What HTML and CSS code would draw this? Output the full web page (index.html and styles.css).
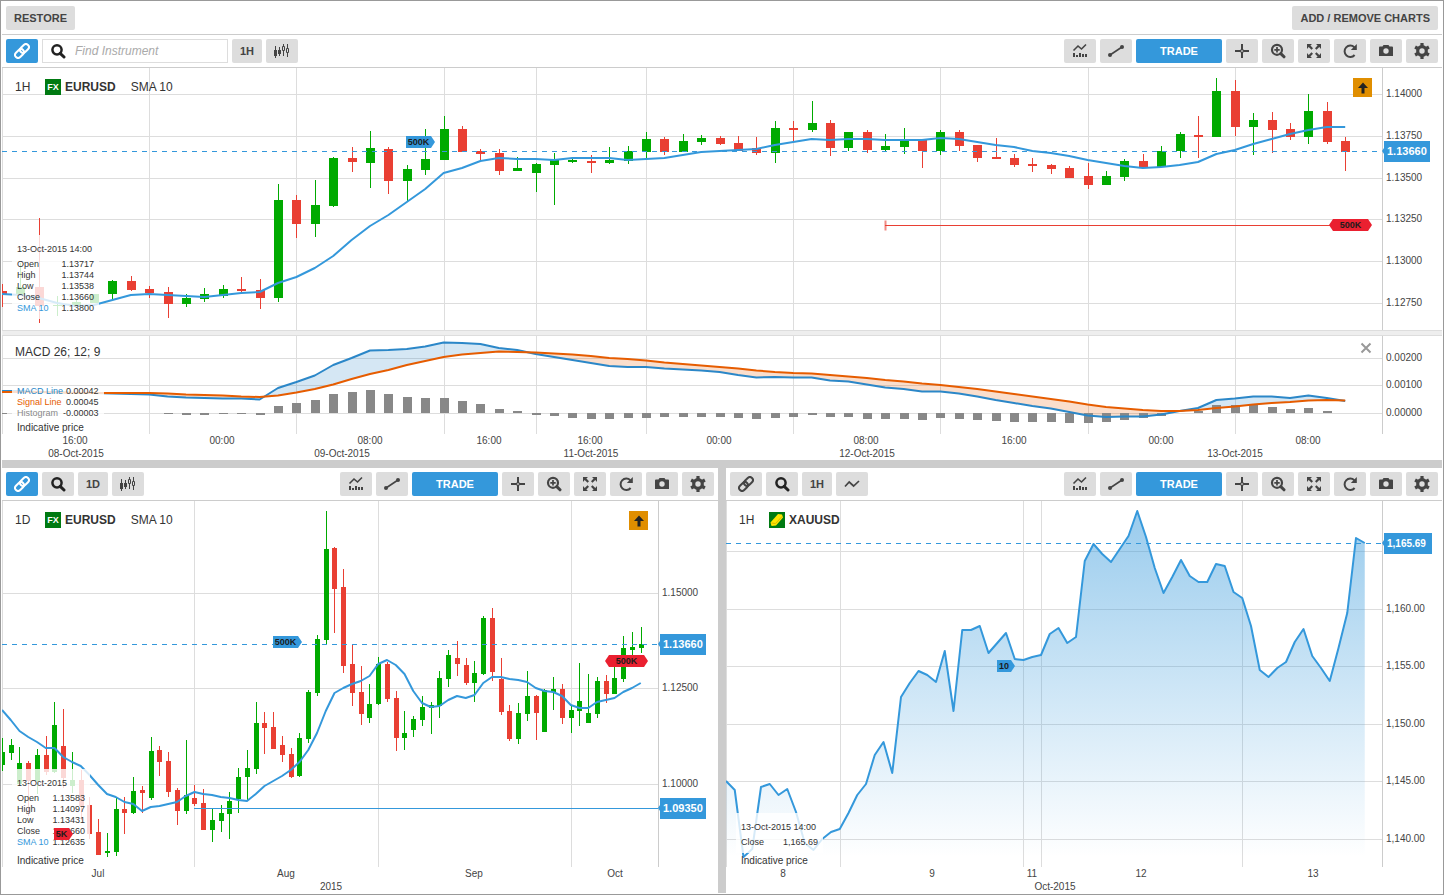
FILE: index.html
```html
<!DOCTYPE html>
<html lang="en">
<head>
<meta charset="utf-8">
<title>Charts</title>
<link rel="stylesheet" href="styles.css">
</head>
<body>
<svg class="sprite" aria-hidden="true">
  <symbol id="i-link" viewBox="0 0 16 16"><g transform="rotate(-45 8 8)" fill="none" stroke="currentColor" stroke-width="2"><rect x="-.5" y="5" width="10" height="6" rx="3"/><rect x="6.500" y="5" width="10" height="6" rx="3"/></g></symbol>
  <symbol id="i-search" viewBox="0 0 16 16"><circle cx="7" cy="6.8" r="4.6" fill="none" stroke="currentColor" stroke-width="2.5"/><path d="M10.2 10.4l3.8 3.6" stroke="currentColor" stroke-width="3" stroke-linecap="round"/></symbol>
  <symbol id="i-candles" viewBox="0 0 16 16"><path d="M1.500 3v12M5.500 4v9M9.500 1v12M13.500 1v13" stroke="currentColor"/><path d="M0 7h3v6H0zM4 7h3v4H4z" fill="currentColor"/><path d="M8.500 3.500h2v4h-2zM12.500 5.500h2v4h-2z" fill="#ddd" stroke="currentColor"/></symbol>
  <symbol id="i-indicator" viewBox="0 0 16 16"><path d="M1.500 7.500L6 3l3.500 3L14 1.500" fill="none" stroke="currentColor" stroke-width="1.600"/><path d="M1 10h2v4H1zM4 12h2v2H4zM7 10h2v4H7zM10 11h2v3h-2zM13 11h2v3h-2z" fill="currentColor"/></symbol>
  <symbol id="i-line" viewBox="0 0 16 16"><path d="M2 12L14 4" stroke="currentColor" stroke-width="1.600"/><circle cx="2" cy="12" r="2" fill="currentColor"/><circle cx="14" cy="4" r="2" fill="currentColor"/></symbol>
  <symbol id="i-cross" viewBox="0 0 16 16"><path d="M8 1v5M8 10v5M1 8h5M10 8h5" stroke="currentColor" stroke-width="2"/><path d="M8 6l2 2-2 2-2-2z" fill="none" stroke="currentColor" stroke-width="1.200"/></symbol>
  <symbol id="i-zoom" viewBox="0 0 16 16"><circle cx="7" cy="6.800" r="5" fill="none" stroke="currentColor" stroke-width="2.200"/><path d="M4.300 6.800h5.400M7 4.100v5.400" stroke="currentColor" stroke-width="1.700"/><path d="M10.800 10.600l3.200 3.200" stroke="currentColor" stroke-width="3" stroke-linecap="round"/></symbol>
  <symbol id="i-expand" viewBox="0 0 16 16"><path d="M1 1h5L4.400 2.600l2.600 2.600-1.500 1.500-2.800-2.600L1 6zM15 1h-5l1.600 1.600L9 5.200l1.500 1.500 2.800-2.600L15 6zM1 15h5l-1.600-1.600L7 10.800 5.500 9.300l-2.800 2.600L1 10zM15 15h-5l1.600-1.600L9 10.800l1.500-1.500 2.800 2.600L15 10z" fill="currentColor"/></symbol>
  <symbol id="i-refresh" viewBox="0 0 16 16"><path d="M12.300 4.200A5.700 5.700 0 1 0 12.600 12" fill="none" stroke="currentColor" stroke-width="2"/><path d="M14.800 1v6H8.800z" fill="currentColor"/></symbol>
  <symbol id="i-camera" viewBox="0 0 16 16"><path d="M1 4.500a1 1 0 0 1 1-1h2.500L5.500 2h5l1 1.500H14a1 1 0 0 1 1 1V13H1z" fill="currentColor"/><circle cx="8" cy="8" r="2.700" fill="#ddd"/></symbol>
  <symbol id="i-gear" viewBox="0 0 16 16"><circle cx="8" cy="8" r="4.300" fill="none" stroke="currentColor" stroke-width="3.200"/><path d="M8 0v3M8 13v3M1.100 4l2.600 1.500M12.300 10.500l2.600 1.500M1.100 12l2.600-1.500M12.300 5.500L14.900 4" stroke="currentColor" stroke-width="3.200"/></symbol>
  <symbol id="i-wave" viewBox="0 0 16 16"><path d="M1 10.500L5.200 6l4.400 4L15 5" fill="none" stroke="currentColor" stroke-width="1.700"/></symbol>
  <symbol id="i-up" viewBox="0 0 16 16"><path d="M8 2.500L13 8H9.500v5.500h-3V8H3z" fill="currentColor"/></symbol>
  <symbol id="i-gold" viewBox="0 0 16 16"><path d="M0 0h16v16H0z" fill="#007a12"/><path d="M1.500 10.500L9 2l4 .5 1 3L7 13.500 2.500 14z" fill="#ffe600"/><path d="M2.500 11l4 .500L13 4.500" fill="none" stroke="#d9b800"/></symbol>
  <symbol id="i-close" viewBox="0 0 16 16"><path d="M3.500 3.500l9 9M12.500 3.500l-9 9" stroke="currentColor" stroke-width="2"/></symbol>
</svg>

<div class="frame">
  <header class="topbar">
    <button class="btn btn-text" type="button">RESTORE</button>
    <button class="btn btn-text" type="button">ADD / REMOVE CHARTS</button>
  </header>

  <main class="board">
    <section class="chart">
      <div class="toolbar">
        <button class="btn btn-blue" type="button" aria-label="Link"><svg class="icon"><use href="#i-link"/></svg></button>
        <label class="search"><svg class="icon"><use href="#i-search"/></svg><input type="text" aria-label="Find Instrument" placeholder="Find Instrument"></label>
        <button class="btn btn-period" type="button">1H</button>
        <button class="btn" type="button" aria-label="Chart type"><svg class="icon"><use href="#i-candles"/></svg></button>
        <span class="spacer"></span>
        <button class="btn" type="button" aria-label="Indicators"><svg class="icon"><use href="#i-indicator"/></svg></button>
        <button class="btn" type="button" aria-label="Draw"><svg class="icon"><use href="#i-line"/></svg></button>
        <button class="btn btn-blue btn-trade" type="button">TRADE</button>
        <button class="btn" type="button" aria-label="Crosshair"><svg class="icon"><use href="#i-cross"/></svg></button>
        <button class="btn" type="button" aria-label="Zoom"><svg class="icon"><use href="#i-zoom"/></svg></button>
        <button class="btn" type="button" aria-label="Expand"><svg class="icon"><use href="#i-expand"/></svg></button>
        <button class="btn" type="button" aria-label="Refresh"><svg class="icon"><use href="#i-refresh"/></svg></button>
        <button class="btn" type="button" aria-label="Snapshot"><svg class="icon"><use href="#i-camera"/></svg></button>
        <button class="btn" type="button" aria-label="Settings"><svg class="icon"><use href="#i-gear"/></svg></button>
      </div>
      <div class="pane pane-main" data-pane="hourly">
        <div class="legend"><span class="period">1H</span><span class="fx">FX</span><b>EURUSD</b><span class="study">SMA 10</span></div>
        <button class="jump" type="button" aria-label="Jump to latest"><svg class="icon"><use href="#i-up"/></svg></button>
        <div class="readout">
          <p>13-Oct-2015 14:00</p>
          <table>
            <tr><th>Open</th><td>1.13717</td></tr>
            <tr><th>High</th><td>1.13744</td></tr>
            <tr><th>Low</th><td>1.13538</td></tr>
            <tr><th>Close</th><td>1.13660</td></tr>
            <tr><th class="blue">SMA 10</th><td>1.13800</td></tr>
          </table>
        </div>
      </div>
      <div class="divider"></div>
      <div class="pane pane-study" data-pane="macd">
        <div class="legend">MACD 26; 12; 9</div>
        <button class="close" type="button" aria-label="Remove MACD"><svg class="icon"><use href="#i-close"/></svg></button>
        <div class="readout">
          <table>
            <tr><th class="blue-dark">MACD Line</th><td>0.00042</td></tr>
            <tr><th class="orange">Signal Line</th><td>0.00045</td></tr>
            <tr><th class="gray">Histogram</th><td>-0.00003</td></tr>
          </table>
        </div>
        <p class="note">Indicative price</p>
      </div>
      <div class="time-axis" data-axis="hourly"></div>
    </section>

    <div class="row">
      <section class="chart">
        <div class="toolbar">
          <button class="btn btn-blue" type="button" aria-label="Link"><svg class="icon"><use href="#i-link"/></svg></button>
          <button class="btn" type="button" aria-label="Find Instrument"><svg class="icon dark"><use href="#i-search"/></svg></button>
          <button class="btn btn-period" type="button">1D</button>
          <button class="btn" type="button" aria-label="Chart type"><svg class="icon"><use href="#i-candles"/></svg></button>
          <span class="spacer"></span>
          <button class="btn" type="button" aria-label="Indicators"><svg class="icon"><use href="#i-indicator"/></svg></button>
          <button class="btn" type="button" aria-label="Draw"><svg class="icon"><use href="#i-line"/></svg></button>
          <button class="btn btn-blue btn-trade" type="button">TRADE</button>
          <button class="btn" type="button" aria-label="Crosshair"><svg class="icon"><use href="#i-cross"/></svg></button>
          <button class="btn" type="button" aria-label="Zoom"><svg class="icon"><use href="#i-zoom"/></svg></button>
          <button class="btn" type="button" aria-label="Expand"><svg class="icon"><use href="#i-expand"/></svg></button>
          <button class="btn" type="button" aria-label="Refresh"><svg class="icon"><use href="#i-refresh"/></svg></button>
          <button class="btn" type="button" aria-label="Snapshot"><svg class="icon"><use href="#i-camera"/></svg></button>
          <button class="btn" type="button" aria-label="Settings"><svg class="icon"><use href="#i-gear"/></svg></button>
        </div>
        <div class="pane pane-main" data-pane="daily">
          <div class="legend"><span class="period">1D</span><span class="fx">FX</span><b>EURUSD</b><span class="study">SMA 10</span></div>
          <button class="jump" type="button" aria-label="Jump to latest"><svg class="icon"><use href="#i-up"/></svg></button>
          <div class="readout readout-raised">
            <p>13-Oct-2015</p>
            <table>
              <tr><th>Open</th><td>1.13583</td></tr>
              <tr><th>High</th><td>1.14097</td></tr>
              <tr><th>Low</th><td>1.13431</td></tr>
              <tr><th>Close</th><td>1.13660</td></tr>
              <tr><th class="blue">SMA 10</th><td>1.12635</td></tr>
            </table>
          </div>
          <p class="note">Indicative price</p>
        </div>
        <div class="time-axis" data-axis="daily"></div>
      </section>

      <section class="chart">
        <div class="toolbar">
          <button class="btn" type="button" aria-label="Link"><svg class="icon"><use href="#i-link"/></svg></button>
          <button class="btn" type="button" aria-label="Find Instrument"><svg class="icon dark"><use href="#i-search"/></svg></button>
          <button class="btn btn-period" type="button">1H</button>
          <button class="btn" type="button" aria-label="Chart type"><svg class="icon"><use href="#i-wave"/></svg></button>
          <span class="spacer"></span>
          <button class="btn" type="button" aria-label="Indicators"><svg class="icon"><use href="#i-indicator"/></svg></button>
          <button class="btn" type="button" aria-label="Draw"><svg class="icon"><use href="#i-line"/></svg></button>
          <button class="btn btn-blue btn-trade" type="button">TRADE</button>
          <button class="btn" type="button" aria-label="Crosshair"><svg class="icon"><use href="#i-cross"/></svg></button>
          <button class="btn" type="button" aria-label="Zoom"><svg class="icon"><use href="#i-zoom"/></svg></button>
          <button class="btn" type="button" aria-label="Expand"><svg class="icon"><use href="#i-expand"/></svg></button>
          <button class="btn" type="button" aria-label="Refresh"><svg class="icon"><use href="#i-refresh"/></svg></button>
          <button class="btn" type="button" aria-label="Snapshot"><svg class="icon"><use href="#i-camera"/></svg></button>
          <button class="btn" type="button" aria-label="Settings"><svg class="icon"><use href="#i-gear"/></svg></button>
        </div>
        <div class="pane pane-main" data-pane="gold">
          <div class="legend"><span class="period">1H</span><svg class="icon instrument"><use href="#i-gold"/></svg><b>XAUUSD</b></div>
          <div class="readout readout-raised">
            <p>13-Oct-2015 14:00</p>
            <table>
              <tr><th>Close</th><td>1,165.69</td></tr>
            </table>
          </div>
          <p class="note">Indicative price</p>
        </div>
        <div class="time-axis" data-axis="gold"></div>
      </section>
    </div>
  </main>
</div>
<script src="charts.js"></script>
</body>
</html>
```

FILE: styles.css
```css
* { box-sizing: border-box; }

body {
  margin: 0;
  background: #fff;
  color: #333;
  font: 12px/16px "Liberation Sans", Arial, sans-serif;
}

p { margin: 0; }

button {
  border: 0;
  padding: 0;
  font-family: inherit;
  cursor: pointer;
}

.sprite {
  position: absolute;
  width: 0;
  height: 0;
}

.icon {
  display: block;
  width: 16px;
  height: 16px;
  overflow: visible;
}

.dark { color: #222; }

.frame {
  display: flex;
  flex-direction: column;
  min-height: 100vh;
  border: 1px solid #999;
  padding: 0 1px 1px;
}

.topbar {
  display: flex;
  justify-content: space-between;
  padding: 5px 4px 4px;
  border-bottom: 1px solid #ccc;
}

.board {
  flex: 1;
  display: flex;
  flex-direction: column;
  gap: 8px;
  background: #ccc;
}

.row {
  flex: 1 1 0;
  display: flex;
  gap: 8px;
}

.chart {
  flex: 1 1 0;
  min-width: 0;
  display: flex;
  flex-direction: column;
  background: #fff;
}

.toolbar {
  display: flex;
  gap: 4px;
  padding: 4px;
  border-bottom: 1px solid #ccc;
}

.spacer { flex: 1; }

.btn {
  display: flex;
  align-items: center;
  justify-content: center;
  width: 32px;
  height: 24px;
  border-radius: 2px;
  background: #ddd;
  color: #444;
  font-size: 11px;
  font-weight: bold;
  white-space: nowrap;
}

.btn-text {
  width: auto;
  padding: 0 8px;
}

.btn-period { width: 30px; }

.btn-blue {
  background: #3498db;
  color: #fff;
}

.btn-trade { width: 86px; }

.search {
  display: flex;
  align-items: center;
  gap: 9px;
  width: 186px;
  height: 24px;
  padding: 0 7px;
  border: 1px solid #ddd;
  color: #222;
}

.search .icon { flex: none; }

.search input {
  min-width: 0;
  flex: 1;
  border: 0;
  padding: 0;
  outline: 0;
  background: none;
  font: inherit;
}

.search input::placeholder {
  color: #aaa;
  font-style: italic;
}

.pane {
  position: relative;
  min-height: 60px;
}

.pane-main { flex: 262 1 0; }
.pane-study { flex: 98 1 0; }

.divider {
  height: 6px;
  background: #eee;
  border: solid #ddd;
  border-width: 1px 0;
}

.plot {
  position: absolute;
  inset: 0;
  width: 100%;
  height: 100%;
  overflow: hidden;
}

.markers { pointer-events: none; }

.legend {
  position: absolute;
  top: 8px;
  left: 13px;
  display: flex;
  align-items: center;
  height: 22px;
}

.pane-study .legend { top: 5px; }

.period { width: 30px; }

.fx {
  width: 16px;
  height: 16px;
  margin-right: 4px;
  background: #007a12;
  color: #fff;
  font: bold 9px/16px "Liberation Sans", Arial, sans-serif;
  text-align: center;
}

.instrument { margin-right: 4px; }

.study { margin-left: 15px; }

.jump {
  position: absolute;
  top: 10px;
  right: 70px;
  display: flex;
  align-items: center;
  justify-content: center;
  width: 19px;
  height: 19px;
  background: #e08e00;
  color: #222;
}

.close {
  position: absolute;
  top: 4px;
  right: 68px;
  background: none;
  color: #999;
}

.readout {
  position: absolute;
  left: 10px;
  bottom: 11px;
  padding: 0 5px 5px;
  background: rgba(255, 255, 255, .8);
  font-size: 9px;
  line-height: 11px;
}

.readout-raised { bottom: 14px; }

.pane-study .readout { bottom: 10px; }

.readout p {
  padding: 9px 2px 4px 0;
}

.readout table {
  width: 100%;
  border-collapse: collapse;
}

.readout th,
.readout td {
  height: 11px;
  padding: 0;
  text-align: left;
  font-weight: normal;
}

.readout td {
  padding-left: 4px;
  text-align: right;
}

.pane-study .readout td { padding-left: 0; }

.readout .blue { color: #3498db; }
.readout .blue-dark { color: #2b87c8; }
.readout .orange { color: #e65c00; }
.readout .gray { color: #888; }

.note {
  position: absolute;
  left: 15px;
  bottom: 0;
  font-size: 10px;
  line-height: 13px;
}

.time-axis {
  position: relative;
  height: 26px;
}

.grid line { stroke: #ddd; }
.grid .axis { stroke: #ccc; }
.crisp { shape-rendering: crispEdges; }
.up { fill: #0a0; }
.down { fill: #e93f33; }
.histogram { fill: #888; }

.average,
.macd,
.signal {
  fill: none;
  stroke: #3498db;
  stroke-width: 2;
  stroke-linejoin: round;
}

.macd { stroke: #2b87c8; }
.signal { stroke: #e65c00; }
.gap-up { fill: rgba(43, 135, 200, .2); }
.gap-down { fill: rgba(230, 92, 0, .2); }

.last {
  stroke: #3498db;
  stroke-dasharray: 5 5;
}

.order-blue { stroke: #3498db; }
.order-red { stroke: #e93f33; }

.order-start {
  stroke: #e93f33;
  stroke-width: 2;
  opacity: .6;
}

.label {
  fill: #444;
  font-size: 10px;
}

.middle { text-anchor: middle; }
.flag { fill: #3498db; }

.flag-text {
  fill: #fff;
  font-size: 11px;
  font-weight: bold;
}

.flag-long { font-size: 10px; }

.marker-blue { fill: #3498db; }
.marker-red { fill: #ea2030; }

.marker-text {
  fill: #1c1c1c;
  font-size: 9px;
  font-weight: bold;
  text-anchor: middle;
}
```

FILE: charts.js
```js
// Width of the price scale at the right of every pane.
const SCALE = 60;

// Candles: direction, high, body top, body bottom, low (in plot units).
const hourlyCandles = `d284 291 294 307;u263 287 295 296;d218 287 306 323;u296 305 306 316;u300 302 306 306;u294 294 303 303;
u280 281 294 299;d276 281 290 291;d286 289 293 298;d287 292 304 318;u294 298 304 307;u288 294 299 302;u285 289 296 298;
d277 289 291 292;d279 290 298 309;u184 200 298 302;d195 200 224 238;u180 205 224 237;u157 158 206 207;d147 158 162 172;
u131 148 163 188;d147 149 181 194;u165 169 181 202;u129 159 170 175;u116 129 160 160;d126 129 152 152;d149 151 154 160;
d149 153 171 175;u157 168 171 171;u163 164 173 192;u153 160 165 205;u157 160 162 163;d155 161 163 173;u147 160 163 164;
u146 151 161 164;u132 139 152 158;d137 139 152 155;u134 141 152 152;u135 138 142 145;d136 138 144 145;d136 143 151 151;
d137 148 153 155;u121 128 153 163;d121 128 130 142;u101 123 130 132;d120 123 148 156;u132 132 148 151;d130 132 150 153;
u134 146 150 151;u128 140 147 154;d140 140 151 168;u130 132 151 155;d130 132 146 151;d145 145 158 162;d138 157 159 159;
d154 158 165 167;d158 164 166 172;d164 165 169 174;d166 168 178 178;d163 176 185 189;u171 176 185 185;u159 161 177 181;
d154 161 167 167;u146 151 167 167;u132 134 151 158;d116 135 137 158;u78 91 137 137;d80 91 127 136;u113 120 127 155;
d112 120 130 153;d123 129 137 140;u94 111 137 144;d102 111 142 144;d137 141 152 171`;

const hourlyAverage = [294, 295, 298, 303, 306, 305, 300, 295, 294, 295, 296, 297, 295, 293, 292, 283, 277, 268, 256, 240,
  226, 215, 202, 189, 173, 168, 161, 158, 159, 159, 160, 158, 158, 158, 160, 159, 158, 155, 152, 151, 150, 149, 145, 142,
  139, 140, 139, 139, 140, 140, 140, 138, 139, 142, 145, 147, 151, 153, 156, 160, 163, 166, 168, 167, 165, 162, 154, 150,
  144, 139, 134, 130, 127, 127];

const macdLine = [391, 391, 392, 392, 393, 393, 393.5, 394, 394.5, 396.5, 397.5, 398, 398.5, 398.5, 399.5, 388, 382, 375.5,
  365, 358, 350.5, 350, 349, 346.5, 342.5, 343, 344, 348, 350, 354, 357, 360, 363, 366, 367, 367, 368.5, 369.5, 370.5, 372,
  375, 377.5, 377, 377.5, 377.5, 380.5, 381.5, 384.5, 387.5, 389, 391.5, 391.5, 393.5, 396.5, 400, 403, 406, 408.5, 412,
  415.5, 417, 416.5, 416.5, 414.5, 411, 408, 400, 398.5, 396.5, 396.5, 398, 395.5, 398, 401];

const signalLine = [392, 392, 392, 392.5, 393, 393, 393, 393, 393, 393.5, 394.5, 395, 395.5, 396.5, 397, 395.5, 392.5, 389,
  384.5, 379, 374, 370, 365, 361, 357, 354.5, 353, 351.5, 352, 352.5, 353.5, 354.5, 356, 358, 359, 360.5, 362.5, 364, 365.5,
  367, 368.5, 370.5, 372, 373, 373.5, 375, 376.5, 378, 380, 381.5, 383.5, 385, 387, 389, 391.5, 394, 396.5, 399, 401.5,
  404.5, 407, 408.5, 410, 411, 411, 410, 408, 406.5, 404.5, 403, 402, 400.5, 400, 400.5];

const histogram = [-1, 0, 0, 0, 0, 0, 0, 0, 0, -1, -2, -2, -1, -1, -2, 7, 10, 13, 19, 21, 23, 19, 16, 15, 15, 12, 9, 4, 2, -2,
  -3, -5, -6, -6, -5, -5, -4, -4, -4, -4, -5, -6, -5, -4, -2, -4, -4, -6, -6, -6, -7, -5, -6, -7, -8, -9, -9, -9, -10, -10,
  -9, -7, -5, -3, 0, 2, 8, 8, 8, 6, 4, 5, 2, 0];

const dailyCandles = `u738 752 765 771;u739 745 753 760;u747 763 784 785;d761 763 781 816;u749 755 781 794;d736 755 772 775;
u702 725 772 773;d709 746 778 788;u752 780 786 793;d770 780 806 820;d797 805 834 839;d819 832 855 855;u833 851 853 857;
u797 809 852 856;d797 809 813 834;u777 791 813 814;d786 790 793 813;u737 751 798 800;d746 750 762 776;d752 761 792 797;
d788 790 811 825;u740 795 811 814;d785 798 804 806;d789 803 830 830;u809 820 830 842;u805 813 821 832;u792 801 814 839;
u768 777 799 813;u750 768 777 800;u702 723 769 774;d712 723 728 754;d712 727 749 749;d736 745 755 762;d748 754 777 778;
u733 738 776 777;u690 692 739 743;u635 639 693 696;u511 549 640 644;d547 548 589 633;d569 587 666 673;d645 664 693 706;
d666 692 714 725;u684 704 718 723;u657 664 704 705;d662 664 699 702;d691 698 738 751;u711 733 738 750;u716 719 730 737;
u696 707 720 726;u702 705 708 734;u671 678 706 718;u650 655 679 687;d641 658 664 676;d658 665 683 685;u661 673 683 702;
u616 618 674 675;d608 618 672 681;d658 679 712 715;d705 711 739 741;u703 713 739 744;u671 696 714 721;d695 696 713 740;
u689 690 732 732;u677 689 692 710;d684 689 718 724;u706 710 718 733;u663 701 711 726;u674 713 723 723;u677 681 714 718;
d675 681 694 703;u666 678 694 694;u636 648 679 682;u632 647 650 655;u627 644 648 653`;

const dailyAverage = [710, 720, 731, 737, 742, 748, 748, 757, 762, 766, 775, 785, 794, 797, 802, 804, 811, 807, 806, 804, 802,
  796, 792, 794, 795, 797, 798, 800, 801, 794, 786, 781, 776, 770, 762, 750, 733, 711, 693, 688, 684, 681, 676, 664, 660,
  665, 674, 691, 703, 707, 706, 700, 696, 698, 695, 683, 677, 677, 679, 680, 682, 688, 691, 692, 696, 705, 708, 708, 702,
  700, 698, 692, 688, 683];

const goldLine = [781, 790, 857, 849, 787, 784, 795, 789, 812, 843, 850, 839, 832, 829, 813, 795, 784, 755, 742, 773, 697, 683,
  671, 675, 682, 651, 711, 630, 630, 626, 653, 643, 633, 659, 660, 657, 655, 634, 628, 643, 637, 561, 544, 554, 562, 549,
  536, 511, 537, 568, 593, 577, 560, 576, 582, 582, 564, 566, 592, 598, 626, 670, 677, 668, 662, 642, 629, 656, 668, 681,
  648, 613, 538, 543];

const hourlyGrid = [149, 296, 444, 536, 646, 793, 940, 1088, 1235];

// area: the left, top, width and height that the plot units cover.
const panes = {
  hourly: {
    area: [2, 68, 1440, 262], step: 18.4, grid: hourlyGrid, body: 9,
    prices: [[94, '1.14000'], [136, '1.13750'], [178, '1.13500'], [219, '1.13250'], [261, '1.13000'], [303, '1.12750']],
    candles: hourlyCandles, average: hourlyAverage, last: 151, flags: [[151, '1.13660']],
    orders: [[885, 1330, 225, 'red']],
    markers: [[406, 435, 142, '500K', 'blue', 'tag'], [1329, 1372, 225, '500K', 'red', 'hex']]
  },
  macd: {
    area: [2, 336, 1440, 98], step: 18.4, grid: hourlyGrid, body: 9,
    prices: [[358, '0.00200'], [385, '0.00100'], [413, '0.00000']],
    macd: macdLine, signal: signalLine, histogram, zero: 413
  },
  daily: {
    area: [2, 501, 716, 366], step: 8.75, grid: [194, 378, 571], body: 5,
    prices: [[593, '1.15000'], [688, '1.12500'], [784, '1.10000']],
    candles: dailyCandles, average: dailyAverage, last: 644, flags: [[644, '1.13660'], [808, '1.09350']],
    orders: [[194, 658, 808, 'blue']],
    markers: [[273, 302, 642, '500K', 'blue', 'tag'], [605, 648, 661, '500K', 'red', 'hex'], [54, 73, 834, '5K', 'red', 'tag']]
  },
  gold: {
    area: [726, 501, 716, 366], step: 8.75, grid: [840, 1023, 1041, 1242],
    prices: [[551, ''], [609, '1,160.00'], [666, '1,155.00'], [724, '1,150.00'], [781, '1,145.00'], [839, '1,140.00']],
    line: goldLine, last: 543, flags: [[543, '1,165.69']],
    markers: [[997, 1015, 666, '10', 'blue', 'tag']]
  }
};

const axes = {
  hourly: {
    left: 2, width: 1440,
    times: [[75, '16:00'], [222, '00:00'], [370, '08:00'], [489, '16:00'], [590, '16:00'], [719, '00:00'], [866, '08:00'],
      [1014, '16:00'], [1161, '00:00'], [1308, '08:00']],
    dates: [[76, '08-Oct-2015'], [342, '09-Oct-2015'], [591, '11-Oct-2015'], [867, '12-Oct-2015'], [1235, '13-Oct-2015']]
  },
  daily: {
    left: 2, width: 716,
    times: [[98, 'Jul'], [286, 'Aug'], [474, 'Sep'], [615, 'Oct']],
    dates: [[331, '2015']]
  },
  gold: {
    left: 726, width: 716,
    times: [[783, '8'], [932, '9'], [1032, '11'], [1141, '12'], [1313, '13']],
    dates: [[1055, 'Oct-2015']]
  }
};

const points = list => list.map(p => p.join(',')).join(' ');

// Fills the space between two lines, coloured by which one is higher.
function gaps(upper, lower, x) {
  const out = [];
  let top = [], bottom = [];
  const flush = sign => {
    if (top.length > 1) {
      out.push(`<polygon class="${sign ? 'gap-up' : 'gap-down'}" points="${points(top.concat(bottom.reverse()))}"/>`);
    }
  };
  upper.forEach((a, i) => {
    const b = lower[i];
    if (i && (a < b) !== (upper[i - 1] < lower[i - 1])) {
      const before = lower[i - 1] - upper[i - 1];
      const t = before / (before - (b - a) || 1);
      const cut = [x(i - 1 + t), upper[i - 1] + (a - upper[i - 1]) * t];
      top.push(cut);
      flush(upper[i - 1] < lower[i - 1]);
      top = [cut];
      bottom = [];
    }
    top.push([x(i), a]);
    bottom.push([x(i), b]);
  });
  flush(upper[upper.length - 1] < lower[lower.length - 1]);
  return out.join('');
}

function drawPane(el, pane) {
  const W = el.clientWidth, H = el.clientHeight;
  const [left, top, width, height] = pane.area;
  const right = W - SCALE;
  const X = v => (v - left) * right / (width - SCALE);
  const Y = v => (v - top) * H / height;
  const at = i => X(left + i * pane.step);
  const mid = v => Math.round(v) + 0.5;
  const path = (cls, data) => `<polyline class="${cls}" points="${points(data.map((v, i) => [at(i), Y(v)]))}"/>`;
  let s = '<g class="grid crisp">';

  s += `<line x1=".5" x2=".5" y2="${H}"/>`;
  pane.grid.forEach(v => { s += `<line x1="${mid(X(v))}" x2="${mid(X(v))}" y2="${H}"/>`; });
  pane.prices.forEach(([v]) => { s += `<line x2="${right}" y1="${mid(Y(v))}" y2="${mid(Y(v))}"/>`; });
  s += `<line class="axis" x1="${right + 0.5}" x2="${right + 0.5}" y2="${H}"/></g>`;
  pane.prices.filter(([, text]) => text).forEach(([v, text]) => {
    s += `<text class="label" x="${right + 4}" y="${Math.round(Y(v)) + 3}">${text}</text>`;
  });

  if (pane.line) {
    const data = pane.line.map((v, i) => [at(i), Y(v)]);
    s += '<linearGradient id="fade" x2="0" y2="1"><stop stop-color="#3498db" stop-opacity=".5"/><stop offset="1" stop-color="#3498db" stop-opacity="0"/></linearGradient>';
    s += `<polygon fill="url(#fade)" points="${points([...data, [at(data.length - 1), H - 10], [0, H - 10]])}"/>`;
    s += path('average', pane.line);
  }
  if (pane.candles) {
    s += '<g class="crisp">';
    pane.candles.replace(/\s*\n/g, '').split(';').forEach((row, i) => {
      const [high, open, close, low] = row.slice(1).split(' ').map(v => Math.round(Y(+v)));
      const x = pane.body > 5 ? Math.round(at(i)) : Math.floor(at(i) + 0.3);
      const half = (pane.body - 1) / 2;
      s += `<path class="${row[0] === 'u' ? 'up' : 'down'}" d="M${x} ${high}h1V${low}h-1zM${x - half} ${open}h${pane.body}V${close}h-${pane.body}z"/>`;
    });
    s += '</g>';
  }
  if (pane.macd) {
    const zero = Math.round(Y(pane.zero));
    s += gaps(pane.macd.map(Y), pane.signal.map(Y), at);
    s += '<g class="histogram crisp">';
    pane.histogram.forEach((v, i) => {
      const size = Math.round(v * H / height);
      s += `<rect x="${Math.round(at(i)) - 4}" y="${zero - Math.max(size, 0)}" width="9" height="${Math.abs(size)}"/>`;
    });
    s += '</g>' + path('macd', pane.macd) + path('signal', pane.signal);
  }
  if (pane.last) {
    s += `<line class="last crisp" x2="${right}" y1="${mid(Y(pane.last))}" y2="${mid(Y(pane.last))}"/>`;
  }
  if (pane.average) s += path('average', pane.average);
  (pane.orders || []).forEach(([from, to, v, tone]) => {
    const y = mid(Y(v));
    s += `<line class="order-${tone} crisp" x1="${X(from)}" x2="${X(to)}" y1="${y}" y2="${y}"/>`;
    if (tone === 'red') s += `<line class="order-start" x1="${mid(X(from))}" x2="${mid(X(from))}" y1="${y - 5}" y2="${y + 5}"/>`;
  });
  (pane.flags || []).forEach(([v, text]) => {
    const y = Math.round(Y(v));
    const long = text.length > 7;
    const w = long ? 48 : 46;
    s += `<path class="flag" d="M${right} ${y}l2-3v-7h${w}v21h-${w}v-8z"/>`;
    s += `<text class="flag-text${long ? ' flag-long' : ''}" x="${right + 5}" y="${y + 4}">${text}</text>`;
  });

  let m = '';
  (pane.markers || []).forEach(([from, to, v, text, tone, shape]) => {
    const a = Math.round(X(from)), b = a + to - from, y = Math.round(Y(v));
    const start = shape === 'hex' ? `M${a} ${y}l4-6` : `M${a} ${y - 6}`;
    const end = shape === 'hex' ? `H${a + 4}z` : `H${a}z`;
    const centre = shape === 'hex' ? (a + b) / 2 : (a + b - 4) / 2;
    m += `<path class="marker-${tone}" d="${start}H${b - 4}l4 6-4 6${end}"/>`;
    m += `<text class="marker-text" x="${centre}" y="${y + 3}">${text}</text>`;
  });
  el.querySelectorAll('.plot').forEach(n => n.remove());
  el.insertAdjacentHTML('afterbegin', `<svg class="plot">${s}</svg>`);
  if (m) el.insertAdjacentHTML('beforeend', `<svg class="plot markers">${m}</svg>`);
}

function drawAxis(el, axis) {
  const X = v => Math.round((v - axis.left) * (el.clientWidth - SCALE) / (axis.width - SCALE));
  const row = (list, y) => list.map(([v, text]) => `<text class="label middle" x="${X(v)}" y="${y}">${text}</text>`).join('');
  el.innerHTML = `<svg class="plot">${row(axis.times, 10)}${row(axis.dates, 23)}</svg>`;
}

function draw() {
  document.querySelectorAll('[data-pane]').forEach(el => drawPane(el, panes[el.dataset.pane]));
  document.querySelectorAll('[data-axis]').forEach(el => drawAxis(el, axes[el.dataset.axis]));
}

draw();
window.addEventListener('resize', draw);
```
